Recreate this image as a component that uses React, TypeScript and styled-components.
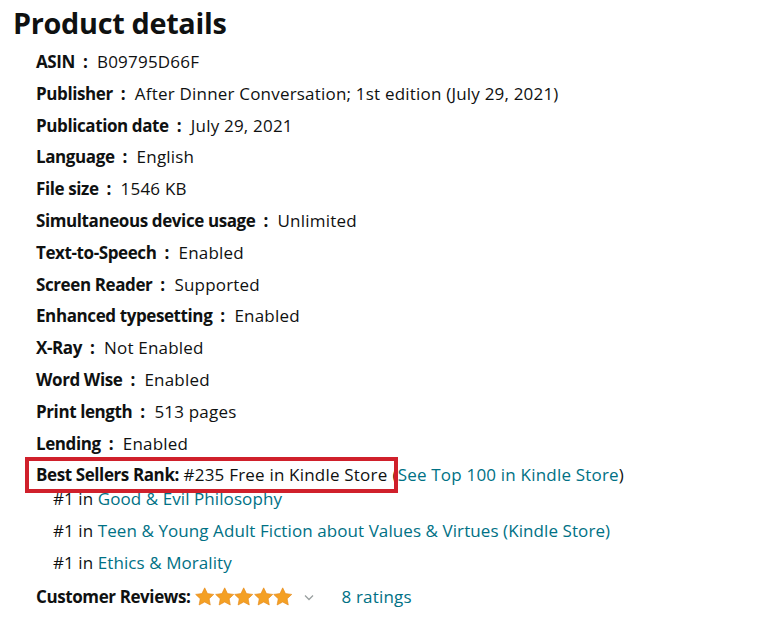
import React from "react";
import styled, { createGlobalStyle } from "styled-components";

const GlobalStyle = createGlobalStyle`
  body {
    margin: 0;
    background: #ffffff;
    color: #0f1111;
    font-family: "Open Sans", "Noto Sans", sans-serif;
  }
`;

const Page = styled.div`
  width: 770px;
  height: 633px;
  padding: 4px 0 0 13px;
  box-sizing: border-box;
`;

const Title = styled.h2`
  margin: 0 0 4px;
  font-size: 28.8px;
  font-weight: 700;
  line-height: 38px;
  letter-spacing: -0.3px;
`;

const List = styled.ul`
  list-style: none;
  margin: 0;
  padding: 0 0 0 23px;
  font-size: 17px;
  line-height: 31.8px;
  letter-spacing: 0.2px;
`;

const Item = styled.li`
  white-space: nowrap;
`;

const Label = styled.span`
  font-weight: 700;
  letter-spacing: -0.4px;
`;

const Sep = styled.span`
  font-weight: 700;
  margin: 0 9px 0 8px;
`;

const Link = styled.a`
  color: #007185;
  text-decoration: none;
  cursor: pointer;
`;

const RankLine = styled.div`
  display: flex;
  align-items: center;
  height: 32px;
`;

const RankBox = styled.span`
  position: relative;
  z-index: 1;
  display: inline-block;
  border: 4px solid #d0202b;
  padding: 0 7px;
  margin: 0 -6px 0 -11px;
  line-height: 28px;
`;

const SubList = styled.ul`
  list-style: none;
  margin: -8px 0 0;
  padding: 0 0 0 17px;
  letter-spacing: 0.08px;
`;

const Reviews = styled.li`
  display: flex;
  align-items: center;
  height: 34px;
  margin-top: 1px;
  white-space: nowrap;
`;

const Stars = styled.span`
  display: inline-flex;
  margin-left: 5px;
`;

const Chevron = styled.span`
  display: inline-flex;
  margin: 2px 27px 0 12px;
`;

const details: [string, string][] = [
  ["ASIN", "B09795D66F"],
  ["Publisher", "After Dinner Conversation; 1st edition (July 29, 2021)"],
  ["Publication date", "July 29, 2021"],
  ["Language", "English"],
  ["File size", "1546 KB"],
  ["Simultaneous device usage", "Unlimited"],
  ["Text-to-Speech", "Enabled"],
  ["Screen Reader", "Supported"],
  ["Enhanced typesetting", "Enabled"],
  ["X-Ray", "Not Enabled"],
  ["Word Wise", "Enabled"],
  ["Print length", "513 pages"],
  ["Lending", "Enabled"],
];

const ranks = [
  "Good & Evil Philosophy",
  "Teen & Young Adult Fiction about Values & Virtues (Kindle Store)",
  "Ethics & Morality",
];

function Star() {
  return (
    <svg width="19.4" height="19" viewBox="0 0 24 23">
      <path
        d="M12 0.8l3.4 7.1 7.8 1-5.7 5.4 1.4 7.7L12 18.3l-6.9 3.7 1.4-7.7L0.8 8.9l7.8-1z"
        fill="#f4a024"
        stroke="#e4891a"
        strokeWidth="0.8"
        strokeLinejoin="round"
      />
    </svg>
  );
}

export default function App() {
  return (
    <Page>
      <GlobalStyle />
      <Title>Product details</Title>
      <List>
        {details.map(([k, v]) => (
          <Item key={k}>
            <Label>{k}</Label>
            <Sep>:</Sep>
            <span>{v}</span>
          </Item>
        ))}
        <Item>
          <RankLine>
            <RankBox>
              <Label>Best Sellers Rank:</Label> #235 Free in Kindle Store
            </RankBox>
            (<Link>See Top 100 in Kindle Store</Link>)
          </RankLine>
          <SubList>
            {ranks.map((r) => (
              <Item key={r}>
                #1 in <Link>{r}</Link>
              </Item>
            ))}
          </SubList>
        </Item>
        <Reviews>
          <Label>Customer Reviews:</Label>
          <Stars>
            <Star />
            <Star />
            <Star />
            <Star />
            <Star />
          </Stars>
          <Chevron>
            <svg width="10" height="7" viewBox="0 0 10 7">
              <path d="M1 1.5l4 4 4-4" fill="none" stroke="#9aa0a0" strokeWidth="1.3" />
            </svg>
          </Chevron>
          <Link>8 ratings</Link>
        </Reviews>
      </List>
    </Page>
  );
}
